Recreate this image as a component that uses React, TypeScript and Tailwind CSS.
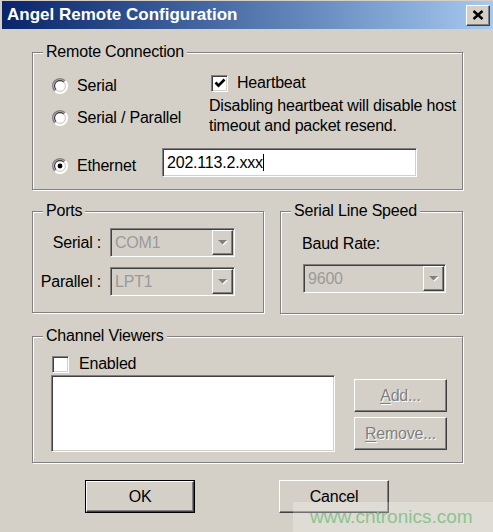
import type { ReactNode } from "react";

// classic 3D edges
const sunken =
  "border border-t-[#808080] border-l-[#808080] border-r-white border-b-white shadow-[inset_1px_1px_0_#404040,inset_-1px_-1px_0_#d4d0c8]";
const raised =
  "border border-t-white border-l-white border-r-[#404040] border-b-[#404040] shadow-[inset_-1px_-1px_0_#808080]";

function Radio({ checked = false }: { checked?: boolean }) {
  return (
    <svg width="16" height="16" viewBox="0 0 16 16" className="shrink-0">
      <circle cx="8" cy="8" r="7.5" fill="#fff" />
      <path d="M13.13 2.87 A7.25 7.25 0 0 0 2.87 13.13" stroke="#808080" strokeWidth="1.5" fill="none" />
      <path d="M2.87 13.13 A7.25 7.25 0 0 0 13.13 2.87" stroke="#fff" strokeWidth="1.5" fill="none" />
      <path d="M11.89 4.11 A5.5 5.5 0 0 0 4.11 11.89" stroke="#404040" strokeWidth="1.3" fill="none" />
      <path d="M4.11 11.89 A5.5 5.5 0 0 0 11.89 4.11" stroke="#d4d0c8" strokeWidth="1.3" fill="none" />
      {checked && <circle cx="8" cy="8" r="2.4" fill="#000" />}
    </svg>
  );
}

function Check({ checked = false }: { checked?: boolean }) {
  return (
    <div className={`flex h-[17px] w-[17px] shrink-0 items-center justify-center bg-white ${sunken}`}>
      {checked && (
        <svg width="12" height="12" viewBox="0 0 12 12">
          <path d="M1.5 5.5 L4.5 8.7 L10.5 2.5" stroke="#000" strokeWidth="2.6" fill="none" />
        </svg>
      )}
    </div>
  );
}

function Group({ title, titleLeft = "left-[10px]", className, children }: { title: string; titleLeft?: string; className: string; children: ReactNode }) {
  return (
    <div className={`relative border border-[#808080] shadow-[inset_1px_1px_0_#fff,1px_1px_0_#fff] ${className}`}>
      <span className={`absolute -top-[11px] bg-[#d4d0c8] px-[3px] ${titleLeft}`}>{title}</span>
      {children}
    </div>
  );
}

function Combo({ value, width }: { value: string; width: string }) {
  return (
    <div className={`flex h-[29px] items-center justify-between bg-[#d4d0c8] pl-[4px] pr-px text-[#9a9a9a] ${width} ${sunken}`}>
      <span>{value}</span>
      <div className={`flex h-[25px] w-[21px] items-center justify-center bg-[#d4d0c8] ${raised}`}>
        <svg width="11" height="7" viewBox="0 0 11 7">
          <path d="M2 2 H11 L6.5 6.5 Z" fill="#fff" />
          <path d="M1 1 H10 L5.5 5.5 Z" fill="#808080" />
        </svg>
      </div>
    </div>
  );
}

function SideButton({ hotkey, rest }: { hotkey: string; rest: string }) {
  return (
    <div className={`flex h-[33px] w-[93px] items-center justify-center bg-[#d4d0c8] text-[#808080] [text-shadow:1px_1px_0_#fff] ${raised}`}>
      <span>
        <span className="underline underline-offset-2">{hotkey}</span>
        {rest}
      </span>
    </div>
  );
}

export default function App() {
  return (
    <div className="relative h-[532px] w-[493px] overflow-hidden bg-[#d4d0c8] font-['Liberation_Sans',Arial,sans-serif] text-[16px] leading-5 tracking-[-0.2px] text-black">
      <div className="ml-[2px] mt-px flex h-[28px] items-center justify-between bg-linear-to-r from-[#0a246a] to-[#a6caf0] pl-[5px] pr-[3px]">
        <span className="text-[17px] font-bold tracking-normal text-white">Angel Remote Configuration</span>
        <div className={`flex h-[21px] w-[24px] items-center justify-center bg-[#d4d0c8] ${raised}`}>
          <svg width="12" height="10" viewBox="0 0 12 10">
            <path d="M1.5 1 L10.5 9 M10.5 1 L1.5 9" stroke="#000" strokeWidth="2.4" />
          </svg>
        </div>
      </div>

      <div className="pl-[32px] pt-[23px]">
        <Group title="Remote Connection" className="h-[138px] w-[431px] pl-[19px] pt-[20px]">
          <div className="flex">
            <div className="w-[157px] pt-[3px]">
              <div className="flex h-5 items-center gap-[9px]">
                <Radio />
                <span>Serial</span>
              </div>
              <div className="mt-[12px] flex h-5 items-center gap-[9px]">
                <Radio />
                <span>Serial / Parallel</span>
              </div>
            </div>
            <div>
              <div className="flex h-5 items-center gap-[9px] pl-[2px]">
                <Check checked />
                <span>Heartbeat</span>
              </div>
              <p className="mt-[3px]">
                Disabling heartbeat will disable host
                <br />
                timeout and packet resend.
              </p>
            </div>
          </div>
          <div className="mt-[12px] flex items-start">
            <div className="mt-[8px] flex h-5 w-[110px] items-center gap-[9px]">
              <Radio checked />
              <span>Ethernet</span>
            </div>
            <div className={`flex h-[29px] w-[255px] items-center bg-white pl-[4px] ${sunken}`}>
              <span>202.113.2.xxx</span>
              <span className="h-[17px] w-px bg-black" />
            </div>
          </div>
        </Group>

        <div className="mt-[21px] flex gap-[16px]">
          <Group title="Ports" className="h-[102px] w-[232px] pt-[16px]">
            <div className="flex items-center">
              <span className="w-[68px] text-right">Serial :</span>
              <div className="ml-[9px]">
                <Combo value="COM1" width="w-[125px]" />
              </div>
            </div>
            <div className="mt-[10px] flex items-center">
              <span className="w-[68px] text-right">Parallel :</span>
              <div className="ml-[9px]">
                <Combo value="LPT1" width="w-[125px]" />
              </div>
            </div>
          </Group>
          <Group title="Serial Line Speed" className="h-[103px] w-[183px] pl-[21px] pt-[22px]">
            <div>Baud Rate:</div>
            <div className="ml-px mt-[10px]">
              <Combo value="9600" width="w-[143px]" />
            </div>
          </Group>
        </div>

        <Group title="Channel Viewers" className="mt-[22px] h-[127px] w-[431px] pl-[19px] pt-[17px]">
          <div className="flex h-5 items-center gap-[10px]">
            <Check />
            <span>Enabled</span>
          </div>
          <div className="mt-px flex">
            <div className={`-ml-px h-[77px] w-[284px] bg-white ${sunken}`} />
            <div className="ml-[19px] mt-[4px] flex flex-col gap-[5px]">
              <SideButton hotkey="A" rest="dd..." />
              <SideButton hotkey="R" rest="emove..." />
            </div>
          </div>
        </Group>

        <div className="mt-[17px] flex gap-[84px] pl-[53px]">
          <div className="h-[33px] w-[110px] border border-black">
            <div className={`flex h-full w-full items-center justify-center bg-[#d4d0c8] ${raised}`}>OK</div>
          </div>
          <div className={`flex h-[33px] w-[110px] items-center justify-center bg-[#d4d0c8] ${raised}`}>Cancel</div>
        </div>
      </div>

      <div className="absolute bottom-0 right-0 flex h-[30px] w-[200px] items-center bg-white/25 pl-[17px] text-[19px] tracking-normal text-[#8cc48c]">
        www.cntronics.com
      </div>
    </div>
  );
}
